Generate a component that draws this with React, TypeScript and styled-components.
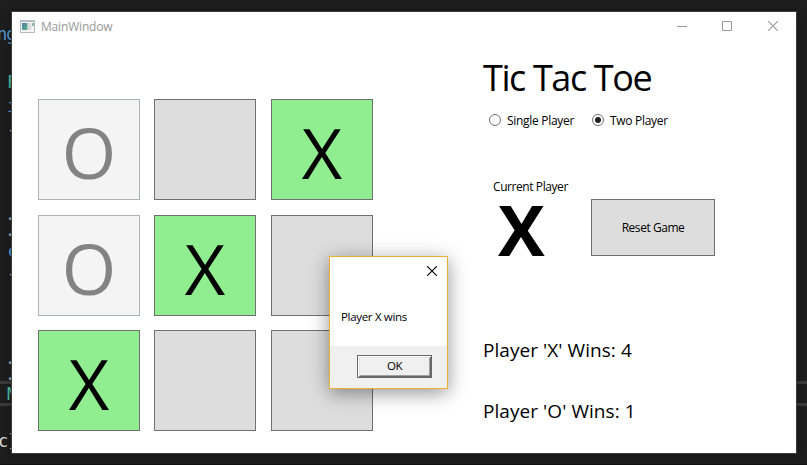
import React from "react";
import styled, { createGlobalStyle, css } from "styled-components";

const Global = createGlobalStyle`
  * { box-sizing: border-box; }
  body { margin: 0; background: #1e1e1e; overflow: hidden; }
`;

const Desktop = styled.div`
  position: relative;
  width: 807px;
  height: 465px;
  padding: 12px 11px 12px 12px;
  overflow: hidden;
  background: #1e1e1e;
  font-family: "Open Sans", "Noto Sans", sans-serif;
  color: #000;
`;

const EditorLayer = styled.div`
  position: absolute;
  inset: 0;
  border-bottom: 1px solid #111;
`;

const EditorLine = styled.div`
  position: absolute;
  left: 0;
  right: 0;
  top: 381px;
  height: 25px;
  border: solid #3c3c3c;
  border-width: 3px 0;
`;

const Code = styled.span<{ $x: number; $y: number; $color: string }>`
  position: absolute;
  left: ${(p) => p.$x}px;
  top: ${(p) => p.$y}px;
  font: 17px/20px "DejaVu Sans Mono", monospace;
  letter-spacing: -1px;
  color: ${(p) => p.$color};
`;

const Window = styled.main`
  position: relative;
  width: 784px;
  height: 441px;
  background: #fff;
  box-shadow: 0 0 0 1px #3c3c3c, 0 2px 10px 2px rgba(0, 0, 0, 0.3);
`;

const TitleBar = styled.header`
  display: flex;
  align-items: center;
  height: 30px;
  padding-left: 8px;
  color: #999;
`;

const WindowTitle = styled.span`
  flex: 1;
  margin-left: 6px;
  font-size: 12px;
  line-height: 16px;
  letter-spacing: -0.18px;
`;

const CaptionButton = styled.button<{ $width?: number }>`
  display: grid;
  place-items: center;
  width: ${(p) => p.$width ?? 46}px;
  height: 30px;
  padding: 0 0 2px;
  border: 0;
  background: none;
  color: inherit;
`;

const Content = styled.div`
  display: flex;
  align-items: flex-start;
`;

const Board = styled.section`
  display: grid;
  grid-template-columns: 102px 103px 102px;
  grid-template-rows: 102px 101px 101px;
  gap: 14px;
  width: 335px;
  margin: 57px 0 0 26px;
`;

const Cell = styled.button<{ $state: "off" | "idle" | "win" }>`
  width: 102px;
  height: 101px;
  padding: 5px 0 0;
  border: 1px solid #707070;
  background: #ddd;
  color: #000;
  font: 70px/80px "Open Sans", "Noto Sans", sans-serif;
  ${(p) => p.$state === "win" && css`background: #90ee90;`}
  ${(p) => p.$state === "off" && css`background: #f4f4f4; border-color: #adb2b5; color: #838383;`}
`;

const Panel = styled.section`
  flex: 1;
  margin: 16px 0 0 110px;
`;

const Heading = styled.h1`
  margin: 0;
  font-size: 36px;
  font-weight: 400;
  line-height: 40px;
  letter-spacing: -1.4px;
  white-space: nowrap;
`;

const Modes = styled.div`
  display: flex;
  height: 16px;
  margin: 15px 0 0 6px;
`;

const Mode = styled.label<{ $width: number }>`
  display: flex;
  align-items: center;
  gap: 6px;
  width: ${(p) => p.$width}px;
  font-size: 12px;
  line-height: 16px;
  letter-spacing: -0.3px;
  white-space: nowrap;
`;

const Dot = styled.i<{ $on?: boolean }>`
  flex: none;
  width: 12px;
  height: 12px;
  margin-top: -2px;
  border: 1px solid #707070;
  border-radius: 50%;
  background: ${(p) => (p.$on ? "radial-gradient(circle, #212121 2.6px, #fff 3.4px)" : "#fff")};
`;

const Status = styled.div`
  display: flex;
  height: 80px;
  margin-top: 50px;
`;

const Current = styled.div`
  width: 108px;
  padding-left: 10px;
  font-size: 12px;
  line-height: 16px;
  letter-spacing: -0.42px;
  white-space: nowrap;
`;

const Turn = styled.strong`
  display: block;
  margin-top: -1px;
  padding-left: 5px;
  font-size: 70px;
  font-weight: 700;
  line-height: 70px;
`;

const ResetButton = styled.button`
  width: 124px;
  height: 57px;
  margin-top: 20px;
  padding: 0;
  border: 1px solid #707070;
  background: #ddd;
  color: #000;
  font: 12px/16px "Open Sans", "Noto Sans", sans-serif;
  letter-spacing: -0.45px;
`;

const Score = styled.p<{ $gap: number }>`
  margin: ${(p) => p.$gap}px 0 0;
  font-size: 19px;
  line-height: 24px;
  letter-spacing: 0.06px;
  white-space: nowrap;
`;

const Dialog = styled.div`
  position: absolute;
  left: 329px;
  top: 256px;
  display: flex;
  flex-direction: column;
  width: 119px;
  height: 133px;
  border: 1px solid #eeb033;
  background: #fff;
  box-shadow: 0 4px 18px rgba(0, 0, 0, 0.42);
`;

const DialogClose = styled.button`
  align-self: flex-end;
  display: flex;
  margin: 9px 10px 0 0;
  padding: 0;
  border: 0;
  background: none;
`;

const Message = styled.p`
  flex: 1;
  margin: 33px 0 0 11px;
  font-size: 11.5px;
  line-height: 16px;
  letter-spacing: -0.32px;
  white-space: nowrap;
`;

const DialogFooter = styled.footer`
  height: 42px;
  padding: 9px 0 0 27px;
  background: #f0f0f0;
`;

const OkButton = styled.button`
  display: block;
  width: 75px;
  height: 23px;
  padding: 0 0 2px;
  border: 1px solid #696969;
  background: #f0f0f0;
  color: #000;
  box-shadow: inset 1px 1px #fff, inset -1px -1px #696969, inset 2px 2px #e3e3e3, inset -2px -2px #a0a0a0;
  font: 11.5px/16px "Open Sans", "Noto Sans", sans-serif;
  letter-spacing: -0.4px;
`;

const AppIcon = () => (
  <svg width="15" height="14" viewBox="0 0 15 14">
    <defs>
      <linearGradient id="pane" x1="0" y1="0" x2="1" y2="1">
        <stop offset="0" stopColor="#4a80ad" />
        <stop offset="1" stopColor="#62b184" />
      </linearGradient>
    </defs>
    <path d="M0 0h15v13H0z" fill="#b4bbc1" />
    <path d="M1 2h13v10H1z" fill="#f5f5f5" />
    <path d="M2 3h5.5v7H2z" fill="url(#pane)" />
    <path d="M8 3h3.5v7H8z" fill="#dedede" />
    <path d="M12 3h2v3h-2z" fill="#8bbcae" />
  </svg>
);

const Cross = ({ size }: { size: number }) => (
  <svg width={size} height={size} viewBox={`0 0 ${size} ${size}`} fill="none" stroke="currentColor" strokeWidth="1.1">
    <path d={`M0 0L${size} ${size}M${size} 0L0 ${size}`} />
  </svg>
);

const cells: { mark: string; state: "off" | "idle" | "win" }[] = [
  { mark: "O", state: "off" },
  { mark: "", state: "idle" },
  { mark: "X", state: "win" },
  { mark: "O", state: "off" },
  { mark: "X", state: "win" },
  { mark: "", state: "idle" },
  { mark: "X", state: "win" },
  { mark: "", state: "idle" },
  { mark: "", state: "idle" },
];

export default function App() {
  return (
    <>
      <Global />
      <Desktop>
        <EditorLayer>
          <EditorLine />
          <Code $x={-3} $y={24} $color="#569cd6">ng</Code>
          <Code $x={7} $y={72} $color="#4ec9b0">F</Code>
          <Code $x={7} $y={96} $color="#569cd6">i</Code>
          <Code $x={7} $y={119} $color="#b4c4cc">-</Code>
          <Code $x={5} $y={204} $color="#9cb8cc">.</Code>
          <Code $x={5} $y={220} $color="#9cb8cc">.</Code>
          <Code $x={8} $y={241} $color="#569cd6">e</Code>
          <Code $x={7} $y={263} $color="#b4c4cc">-</Code>
          <Code $x={5} $y={348} $color="#9cb8cc">.</Code>
          <Code $x={5} $y={364} $color="#9cb8cc">.</Code>
          <Code $x={7} $y={384} $color="#4ec9b0">M</Code>
          <Code $x={-2} $y={431} $color="#dcdcdc">c]</Code>
        </EditorLayer>
        <Window>
          <TitleBar>
            <AppIcon />
            <WindowTitle>MainWindow</WindowTitle>
            <CaptionButton $width={44} aria-label="Minimize">
              <svg width="10" height="10"><path d="M0 5.5h10" stroke="currentColor" /></svg>
            </CaptionButton>
            <CaptionButton aria-label="Maximize">
              <svg width="10" height="10"><path d="M.5 .5h9v9h-9z" fill="none" stroke="currentColor" /></svg>
            </CaptionButton>
            <CaptionButton aria-label="Close"><Cross size={10} /></CaptionButton>
          </TitleBar>
          <Content>
            <Board>
              {cells.map((c, i) => (
                <Cell key={i} $state={c.state}>{c.mark}</Cell>
              ))}
            </Board>
            <Panel>
              <Heading>Tic Tac Toe</Heading>
              <Modes>
                <Mode $width={103}><Dot />Single Player</Mode>
                <Mode $width={90}><Dot $on />Two Player</Mode>
              </Modes>
              <Status>
                <Current>
                  Current Player
                  <Turn>X</Turn>
                </Current>
                <ResetButton>Reset Game</ResetButton>
              </Status>
              <Score $gap={79}>Player 'X' Wins: 4</Score>
              <Score $gap={37}>Player 'O' Wins: 1</Score>
            </Panel>
          </Content>
        </Window>
        <Dialog>
          <DialogClose aria-label="Close"><Cross size={10} /></DialogClose>
          <Message>Player X wins</Message>
          <DialogFooter><OkButton>OK</OkButton></DialogFooter>
        </Dialog>
      </Desktop>
    </>
  );
}
